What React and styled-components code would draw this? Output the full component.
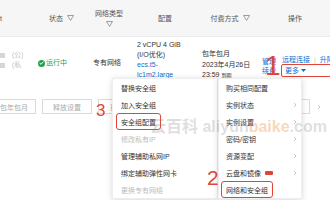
import React from 'react'
import styled, { createGlobalStyle } from 'styled-components'

const GlobalStyle = createGlobalStyle`
  html, body { margin: 0; padding: 0; background: #fff; }
  body {
    font-family: "Liberation Sans", "Noto Sans CJK SC", sans-serif;
    font-size: 7px;
    color: #333;
  }
`

const COLS = '35px 53px 42px 70px 60px 70px'

const Page = styled.div`
  position: relative;
  width: 330px;
  height: 200px;
  overflow: hidden;
`

const HeadRow = styled.div`
  display: grid;
  grid-template-columns: ${COLS};
  height: 36px;
  background: #f6f6f7;
  border-bottom: 1px solid #ebebeb;
  color: #555;
`

const HeadCell = styled.div`
  display: flex;
  flex-direction: ${p => (p.$stack ? 'column' : 'row')};
  align-items: center;
  justify-content: ${p => (p.$left ? 'flex-start' : 'center')};
  gap: ${p => (p.$stack ? '3px' : '4px')};
  line-height: 9px;
  white-space: nowrap;
`

const BodyRow = styled.div`
  display: grid;
  grid-template-columns: ${COLS};
  height: 47px;
  align-items: start;
  line-height: 10px;
  white-space: nowrap;
`

const Cell = styled.div`
  padding-top: ${p => p.$top || 0}px;
  padding-left: ${p => p.$left || 0}px;
  line-height: ${p => p.$lh || 10}px;
`

const Blur = styled.div`
  display: flex;
  align-items: center;
  gap: 7px;
  color: #c4c4c4;
  filter: blur(0.6px);
`

const BlurBlock = styled.span`
  width: 5px;
  height: 5px;
  background: #d6d6d6;
`

const Status = styled.div`
  display: flex;
  align-items: center;
  gap: 1px;
  color: #2a9d4a;
`

const CheckDot = styled.span`
  width: 7px;
  height: 7px;
  border-radius: 50%;
  background: #22a34a;
  display: inline-flex;
  align-items: center;
  justify-content: center;
`

const Link = styled.span`
  color: #0a6fd0;
  display: block;
`

const Small = styled.span`
  font-size: 5px;
  margin-left: 2px;
`

const Ops = styled.div`
  display: flex;
  align-items: center;
  padding-left: 2px;
  padding-top: 18px;
  line-height: 9px;
`

const OpStack = styled.div`
  display: flex;
  flex-direction: column;
`

const VDivider = styled.span`
  width: 1px;
  height: 14px;
  background: #dcdcdc;
  margin: 0 3px 0 3px;
`

const OpLine = styled.div`
  display: flex;
  align-items: center;
  gap: 4px;
  color: #0a6fd0;
`

const Bar = styled.span`
  color: #ccc;
`

const More = styled.span`
  display: inline-flex;
  align-items: center;
  gap: 2px;
  color: #0a6fd0;
  margin-left: -1px;
  padding: 1px 3px;
  border: 1.5px solid ${p => (p.$marked ? '#e2443a' : 'transparent')};
  border-radius: 2px;
`

const Footer = styled.div`
  display: flex;
  align-items: center;
  gap: 6px;
  padding-top: 15px;
`

const Btn = styled.span`
  height: 13px;
  display: inline-flex;
  align-items: center;
  padding: 0 ${p => p.$pad || 7}px;
  border: 1px solid #dadada;
  color: #aaa;
  margin-left: ${p => p.$ml || 0}px;
`

const Pager = styled.div`
  margin-left: auto;
  display: flex;
  align-items: center;
  gap: 7px;
  margin-right: 9px;
`

const PagerBox = styled.span`
  width: 22px;
  height: 13px;
  border: 1px solid #dadada;
`

const MenuWrap = styled.div`
  position: absolute;
  left: 112px;
  top: 78px;
  display: flex;
  align-items: flex-start;
`

const Menu = styled.div`
  width: ${p => p.$w}px;
  background: #fff;
  box-shadow: 0 1px 6px rgba(0, 0, 0, 0.16);
  border: 1px solid #eee;
  box-sizing: border-box;
`

const Item = styled.div`
  height: 17px;
  display: flex;
  align-items: center;
  padding-left: ${p => p.$pad}px;
  padding-right: 4px;
  color: ${p => (p.$disabled ? '#bdbdbd' : '#333')};
  white-space: nowrap;
`

const ItemLabel = styled.span`
  display: inline-flex;
  align-items: center;
  gap: 4px;
  height: 15px;
  padding: 0 ${p => (p.$marked ? 4 : 0)}px;
  margin-left: ${p => (p.$marked ? -5 : 0)}px;
  border: ${p => (p.$marked ? '1.5px solid #e2443a' : 'none')};
  border-radius: 3px;
`

const Chevron = styled.span`
  margin-left: auto;
  display: inline-flex;
`

const NewTag = styled.span`
  width: 8px;
  height: 4px;
  background: #e2443a;
  border-radius: 1px;
`

const Mark = styled.span`
  position: absolute;
  left: ${p => p.$x}px;
  top: ${p => p.$y}px;
  font-family: "Liberation Sans", sans-serif;
  font-size: ${p => p.$size}px;
  line-height: 1;
  color: #e2443a;
`

const Watermark = styled.div`
  position: absolute;
  left: 150px;
  top: 113px;
  font-family: "Liberation Sans", "Noto Sans CJK SC", sans-serif;
  font-size: 16px;
  font-weight: bold;
  color: rgba(140, 140, 140, 0.28);
  white-space: nowrap;
  pointer-events: none;
`

const Orange = styled.span`
  color: rgba(235, 140, 60, 0.35);
`

const Funnel = () => (
  <svg width="7" height="6" viewBox="0 0 7 6">
    <path d="M0.5 0.5 H6.5 L3.5 5.5 Z" fill="none" stroke="#888" strokeWidth="0.8" strokeLinejoin="round" />
  </svg>
)

const Arrow = () => (
  <svg width="4" height="6" viewBox="0 0 4 6">
    <path d="M1 1 L3 3 L1 5" fill="none" stroke="#bbb" strokeWidth="0.8" />
  </svg>
)

const subItems = [
  { label: '替换安全组' },
  { label: '加入安全组' },
  { label: '安全组配置', marked: true },
  { label: '修改私有IP', disabled: true },
  { label: '管理辅助私网IP' },
  { label: '绑定辅助弹性网卡' },
  { label: '更换专有网络', disabled: true },
]

const mainItems = [
  { label: '购买相同配置' },
  { label: '实例状态', arrow: true },
  { label: '实例设置', arrow: true },
  { label: '密码/密钥', arrow: true },
  { label: '资源变配', arrow: true },
  { label: '云盘和镜像', arrow: true, tag: true },
  { label: '网络和安全组', marked: true },
]

export default function App() {
  return (
    <Page>
      <GlobalStyle />
      <HeadRow>
        <HeadCell $left>t</HeadCell>
        <HeadCell>状态 <Funnel /></HeadCell>
        <HeadCell $stack>网络类型<Funnel /></HeadCell>
        <HeadCell>配置</HeadCell>
        <HeadCell>付费方式 <Funnel /></HeadCell>
        <HeadCell>操作</HeadCell>
      </HeadRow>
      <BodyRow>
        <Cell $top={13}>
          <Blur><BlurBlock />(公)</Blur>
          <Blur><BlurBlock />(私</Blur>
        </Cell>
        <Cell $top={21} $left={3}>
          <Status>
            <CheckDot>
              <svg width="5" height="4" viewBox="0 0 5 4">
                <path d="M0.6 2 L2 3.3 L4.4 0.7" fill="none" stroke="#fff" strokeWidth="1" />
              </svg>
            </CheckDot>
            运行中
          </Status>
        </Cell>
        <Cell $top={21} $left={5}>专有网络</Cell>
        <Cell $top={3} $left={7}>
          <div>2 vCPU 4 GiB</div>
          <div>(I/O优化)</div>
          <Link>ecs.t5-</Link>
          <Link>lc1m2.large</Link>
        </Cell>
        <Cell $top={12} $left={2} $lh={10.5}>
          <div>包年包月</div>
          <div>2023年4月26日</div>
          <div>23:59<Small>到期</Small></div>
        </Cell>
        <Ops>
          <OpStack>
            <Link>管理</Link>
            <Link>续费</Link>
          </OpStack>
          <VDivider />
          <OpStack>
            <OpLine>远程连接<Bar>|</Bar>升降配</OpLine>
            <More $marked>
              更多
              <svg width="5" height="3" viewBox="0 0 5 3"><path d="M0 0 H5 L2.5 3 Z" fill="#0a6fd0" /></svg>
            </More>
          </OpStack>
        </Ops>
      </BodyRow>
      <Footer>
        <Btn $ml={-8}>包年包月</Btn>
        <Btn $pad={10}>释放设置</Btn>
        <Btn $pad={11}>更多</Btn>
        <Pager>
          <PagerBox />
          <Arrow />
        </Pager>
      </Footer>

      <MenuWrap>
        <Menu $w={106}>
          {subItems.map(it => (
            <Item key={it.label} $pad={8} $disabled={it.disabled}>
              <ItemLabel $marked={it.marked}>{it.label}</ItemLabel>
            </Item>
          ))}
        </Menu>
        <Menu $w={84}>
          {mainItems.map(it => (
            <Item key={it.label} $pad={7}>
              <ItemLabel $marked={it.marked}>
                {it.label}
                {it.tag && <NewTag />}
              </ItemLabel>
              {it.arrow && <Chevron><Arrow /></Chevron>}
            </Item>
          ))}
        </Menu>
      </MenuWrap>

      <Watermark>云百科 aliyun<Orange>baike</Orange>.com</Watermark>
      <Mark $x={265} $y={52} $size={28}>1</Mark>
      <Mark $x={96} $y={102} $size={17}>3</Mark>
      <Mark $x={207} $y={167} $size={21}>2</Mark>
    </Page>
  )
}
